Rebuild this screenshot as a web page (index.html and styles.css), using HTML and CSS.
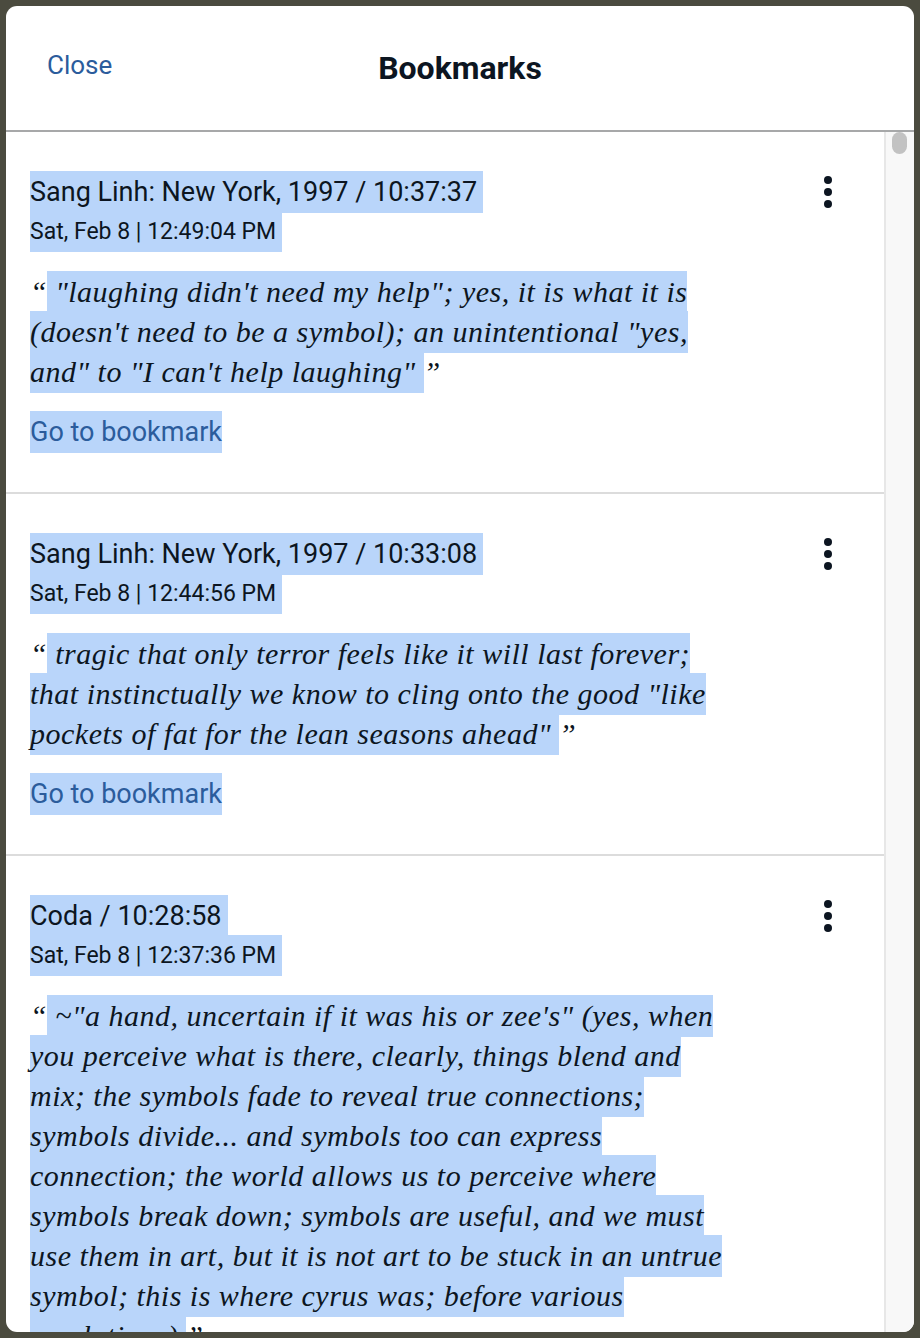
FILE: index.html
```html
<!DOCTYPE html>
<html lang="en">
<head>
<meta charset="utf-8">
<title>Bookmarks</title>
<link rel="stylesheet" href="styles.css">
</head>
<body>
<div class="modal">
  <header class="modal-header">
    <a class="close-link">Close</a>
    <h1 class="modal-title">Bookmarks</h1>
    <span class="spacer"></span>
  </header>
  <div class="modal-body">
    <ul class="bookmark-list">
      <li class="bookmark">
        <div class="bookmark-main">
          <div class="bookmark-title"><span class="sel">Sang Linh: New York, 1997 / 10:37:37</span></div>
          <div class="bookmark-date"><span class="sel">Sat, Feb 8 | 12:49:04 PM</span></div>
          <p class="bookmark-quote">“<span class="sel"> "laughing didn't need my help"; yes, it is what it is (doesn't need to be a symbol); an unintentional "yes, and" to "I can't help laughing" </span>”</p>
          <div class="bookmark-go"><a class="go-link sel">Go to bookmark</a></div>
        </div>
        <button class="kebab" aria-label="More"><i></i><i></i><i></i></button>
      </li>
      <li class="bookmark">
        <div class="bookmark-main">
          <div class="bookmark-title"><span class="sel">Sang Linh: New York, 1997 / 10:33:08</span></div>
          <div class="bookmark-date"><span class="sel">Sat, Feb 8 | 12:44:56 PM</span></div>
          <p class="bookmark-quote">“<span class="sel"> tragic that only terror feels like it will last forever; that instinctually we know to cling onto the good "like pockets of fat for the lean seasons ahead" </span>”</p>
          <div class="bookmark-go"><a class="go-link sel">Go to bookmark</a></div>
        </div>
        <button class="kebab" aria-label="More"><i></i><i></i><i></i></button>
      </li>
      <li class="bookmark">
        <div class="bookmark-main">
          <div class="bookmark-title"><span class="sel">Coda / 10:28:58</span></div>
          <div class="bookmark-date"><span class="sel">Sat, Feb 8 | 12:37:36 PM</span></div>
          <p class="bookmark-quote">“<span class="sel"> ~"a hand, uncertain if it was his or zee's" (yes, when you perceive what is there, clearly, things blend and mix; the symbols fade to reveal true connections; symbols divide... and symbols too can express connection; the world allows us to perceive where symbols break down; symbols are useful, and we must use them in art, but it is not art to be stuck in an untrue symbol; this is where cyrus was; before various revelations) </span>”</p>
          <div class="bookmark-go"><a class="go-link sel">Go to bookmark</a></div>
        </div>
        <button class="kebab" aria-label="More"><i></i><i></i><i></i></button>
      </li>
    </ul>
    <div class="scrollbar"><div class="scroll-thumb"></div></div>
  </div>
</div>
</body>
</html>
```

FILE: styles.css
```css
* { box-sizing: border-box; }
html, body { margin: 0; padding: 0; }
body {
  background: #4b4b3f;
  width: 920px;
  height: 1338px;
  overflow: hidden;
  font-family: Roboto, "Liberation Sans", sans-serif;
  color: #0c1521;
}
.modal {
  margin: 6px;
  height: 1326px;
  background: #fff;
  border-radius: 11px;
  overflow: hidden;
  display: flex;
  flex-direction: column;
}
.modal-header {
  height: 126px;
  flex: none;
  border-bottom: 2px solid #a7a8a9;
  display: grid;
  grid-template-columns: 1fr auto 1fr;
  align-items: center;
  padding: 0 41px;
}
.close-link {
  font-size: 26px;
  color: #2b5c9c;
  justify-self: start;
  margin-top: -6px;
}
.modal-title {
  margin: 0;
  font-size: 32px;
  font-weight: 700;
  color: #0c1521;
}
.modal-body {
  flex: 1;
  display: flex;
  min-height: 0;
}
.bookmark-list {
  list-style: none;
  margin: 0;
  padding: 0;
  flex: 1;
  overflow: hidden;
}
.bookmark {
  display: flex;
  align-items: flex-start;
  padding: 40px 44px 40px 24px;
  border-bottom: 2px solid #dcdcdc;
}
.bookmark-main {
  flex: 1;
  min-width: 0;
}
.sel { background: #b9d5fa; }
.bookmark-title {
  font-size: 27px;
  line-height: 40px;
}
.bookmark-title .sel { padding: 5px 6px 5px 0; }
.bookmark-date {
  font-size: 23px;
  line-height: 40px;
}
.bookmark-date .sel { padding: 7px 6px 7px 0; }
.bookmark-quote {
  margin: 20px 0 0;
  max-width: 700px;
  font-family: "Liberation Serif", serif;
  font-style: italic;
  font-size: 30px;
  letter-spacing: 0.5px;
  line-height: 40px;
}
.bookmark-quote .sel { padding: 4px 0 5px; }
.bookmark-go {
  margin-top: 20px;
  font-size: 27px;
  line-height: 40px;
}
.go-link {
  color: #2b5c9c;
  padding: 5px 0;
}
.kebab {
  flex: none;
  width: 24px;
  margin: 4px 0 0 20px;
  padding: 0;
  border: 0;
  background: none;
  display: flex;
  flex-direction: column;
  align-items: center;
  gap: 4px;
}
.kebab i {
  display: block;
  width: 8px;
  height: 8px;
  border-radius: 50%;
  background: #0c1521;
}
.scrollbar {
  flex: none;
  width: 30px;
  background: #f8f8f8;
  border-left: 2px solid #e7e7e7;
  padding: 0 0 0 6px;
}
.scroll-thumb {
  width: 15px;
  height: 22px;
  border-radius: 8px;
  background: #c2c2c2;
}
```
